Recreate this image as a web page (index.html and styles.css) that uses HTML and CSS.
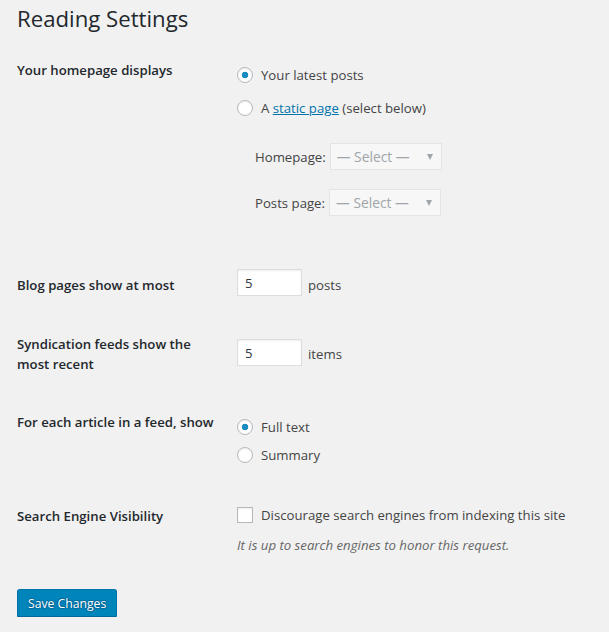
FILE: index.html
```
<!DOCTYPE html>
<html lang="en">
<head>
    <meta charset="UTF-8">
    <title>Reading Settings</title>
    <link rel="stylesheet" href="styles.css">
</head>
<body>
    <div class="wrap">
        <h1>Reading Settings</h1>
        <form>
            <div class="row row-front">
                <div class="label">Your homepage displays</div>
                <div class="field">
                    <label class="choice"><input type="radio" name="show_on_front" checked>Your latest posts</label>
                    <label class="choice"><input type="radio" name="show_on_front">A&nbsp;<a href="#">static page</a>&nbsp;(select below)</label>
                    <div class="pages">
                        <div class="page-line">Homepage: <span class="select">— Select —</span></div>
                        <div class="page-line">Posts page: <span class="select">— Select —</span></div>
                    </div>
                </div>
            </div>

            <div class="row row-posts">
                <div class="label">Blog pages show at most</div>
                <div class="field inline">
                    <input class="small-text" type="text" value="5"> <span class="unit">posts</span>
                </div>
            </div>

            <div class="row row-feed">
                <div class="label">Syndication feeds show the most recent</div>
                <div class="field inline">
                    <input class="small-text" type="text" value="5"> <span class="unit">items</span>
                </div>
            </div>

            <div class="row row-article">
                <div class="label">For each article in a feed, show</div>
                <div class="field">
                    <label class="choice"><input type="radio" name="rss_use_excerpt" checked>Full text</label>
                    <label class="choice"><input type="radio" name="rss_use_excerpt">Summary</label>
                </div>
            </div>

            <div class="row row-search">
                <div class="label">Search Engine Visibility</div>
                <div class="field">
                    <label class="choice"><input type="checkbox">Discourage search engines from indexing this site</label>
                    <p class="description">It is up to search engines to honor this request.</p>
                </div>
            </div>

            <button type="button" class="button-primary">Save Changes</button>
        </form>
    </div>
</body>
</html>
```

FILE: styles.css
```
* {
    box-sizing: border-box;
}

body {
    margin: 0;
    background-color: #f1f1f1;
    color: #444;
    font-family: "Open Sans", Arial, sans-serif;
    font-size: 13.2px;
}

.wrap {
    padding: 0 17px;
}

h1 {
    margin: 0;
    padding-top: 4px;
    font-size: 22.2px;
    line-height: 29px;
    font-weight: 400;
    color: #23282d;
}

.row {
    display: grid;
    grid-template-columns: 220px 1fr;
}

.label {
    width: 200px;
    font-weight: 600;
    line-height: 20px;
    color: #23282d;
}

.field {
    line-height: 20px;
}

.choice {
    display: flex;
    align-items: center;
    height: 20px;
}

.choice input {
    appearance: none;
    -webkit-appearance: none;
    width: 16px;
    height: 16px;
    margin: 0 8px 0 0;
    border: 1px solid #b4b9be;
    background: #fff;
    box-shadow: inset 0 1px 2px rgba(0, 0, 0, 0.07);
}

.choice input[type="radio"] {
    border-radius: 50%;
}

.choice input[type="radio"]:checked {
    background: radial-gradient(circle, #1e8cbe 0 3px, #fff 3.6px);
}

.choice a {
    color: #0073aa;
}

/* homepage row */
.row-front {
    margin-top: 27px;
}

.row-front .field {
    padding-top: 5px;
}

.row-front .choice {
    margin-bottom: 13px;
}

.pages {
    padding: 12px 0 0 18px;
}

.page-line {
    display: flex;
    align-items: center;
    gap: 4px;
    margin-bottom: 19px;
}

.page-line:last-child {
    margin-bottom: 0;
}

.select {
    position: relative;
    display: inline-block;
    width: 112px;
    height: 27px;
    line-height: 25px;
    padding-left: 6px;
    border: 1px solid #e2e4e7;
    background: #f7f7f7;
    color: #a0a5aa;
    font-size: 13.8px;
}

.select::after {
    content: "";
    position: absolute;
    right: 8px;
    top: 10px;
    border-left: 3px solid transparent;
    border-right: 3px solid transparent;
    border-top: 6px solid #a0a5aa;
}

/* number rows */
.inline {
    display: flex;
    align-items: center;
    gap: 6px;
}

.unit {
    padding-top: 4px;
}

.small-text {
    width: 65px;
    height: 27px;
    padding: 0 7px;
    border: 1px solid #ddd;
    background: #fff;
    box-shadow: inset 0 1px 2px rgba(0, 0, 0, 0.07);
    font-family: inherit;
    font-size: 13.2px;
    color: #32373c;
    outline: none;
}

.row-posts {
    margin-top: 53px;
}

.row-posts .label {
    padding-top: 6px;
}

.row-feed {
    margin-top: 38px;
}

.row-feed .field {
    padding-top: 5px;
    align-items: flex-start;
}

.row-feed .unit {
    padding-top: 5px;
}

/* feed article row */
.row-article {
    margin-top: 38px;
}

.row-article .field {
    padding-top: 5px;
}

.row-article .choice:first-child {
    margin-bottom: 8px;
}

/* search row */
.row-search {
    margin-top: 40px;
}

.row-search .label {
    padding-top: 1px;
}

.description {
    margin: 10px 0 0;
    font-style: italic;
    color: #666;
}

.button-primary {
    display: block;
    margin-top: 34px;
    height: 28px;
    padding: 0 10px;
    border: 1px solid #0073aa;
    border-bottom-color: #006799;
    border-radius: 3px;
    background: #0085ba;
    box-shadow: 0 1px 0 #006799;
    color: #fff;
    font-family: inherit;
    font-size: 12.2px;
    text-shadow: 0 -1px 1px #006799, 1px 0 1px #006799, 0 1px 1px #006799, -1px 0 1px #006799;
    cursor: pointer;
}
```
